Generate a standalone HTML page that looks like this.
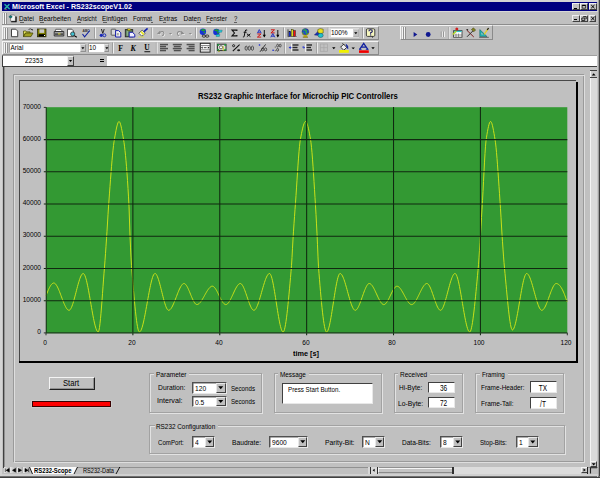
<!DOCTYPE html>
<html><head><meta charset="utf-8">
<style>
*{box-sizing:border-box}
html,body{margin:0;padding:0;width:600px;height:478px;overflow:hidden;background:#c0c0c0;font-family:"Liberation Sans",sans-serif;color:#000}
.a{position:absolute}
.t{position:absolute;white-space:nowrap;line-height:1;transform-origin:0 0}
svg{overflow:visible}
</style></head><body>
<div class="a" style="left:0px;top:0px;width:600px;height:478px;background:#d4d4d4;"></div>
<div class="a" style="left:2px;top:2px;width:596px;height:474px;background:#c0c0c0;"></div>
<div class="a" style="left:598px;top:0px;width:1px;height:478px;background:#a0a0a0;"></div>
<div class="a" style="left:599px;top:0px;width:1px;height:478px;background:#404040;"></div>
<div class="a" style="left:0px;top:476px;width:600px;height:1px;background:#707070;"></div>
<div class="a" style="left:0px;top:477px;width:600px;height:1px;background:#404040;"></div>
<div class="a" style="left:2px;top:2px;width:595.2px;height:8.8px;background:#000080;"></div>
<svg class="a" style="left:0;top:0" width="14" height="12"><path d="M4.6,4.2 L9.6,9 M9.4,4.2 L4.6,9" stroke="#30c0b0" stroke-width="1.3"/><path d="M4.8,4.4 L9.4,8.8" stroke="#108070" stroke-width="0.5"/><path d="M4.4,9.4 L7,9.4" stroke="#b07830" stroke-width="0.6"/></svg>
<div class="t" style="left:12.40px;top:4.43px;font-size:7.143px;transform:scaleX(0.9992);font-weight:bold;color:#fff">Microsoft Excel - RS232scopeV1.02</div>
<div class="a" style="left:572px;top:3px;width:7.6px;height:6.8px;background:#c0c0c0;border-top:1px solid #f0f0f0;border-left:1px solid #f0f0f0;border-right:1px solid #404040;border-bottom:1px solid #404040"></div>
<div class="a" style="left:574.2px;top:7.5px;width:3.3px;height:1px;background:#000;"></div>
<div class="a" style="left:580px;top:3px;width:7.6px;height:6.8px;background:#c0c0c0;border-top:1px solid #f0f0f0;border-left:1px solid #f0f0f0;border-right:1px solid #404040;border-bottom:1px solid #404040"></div>
<svg class="a" style="left:580px;top:3px" width="8" height="7"><path d="M2.2,2.2 H5.6 V5.2 H2.2Z" fill="none" stroke="#000" stroke-width="0.7"/><rect x="2.2" y="2" width="3.4" height="1" fill="#000"/></svg>
<div class="a" style="left:589px;top:3px;width:7.6px;height:6.8px;background:#c0c0c0;border-top:1px solid #f0f0f0;border-left:1px solid #f0f0f0;border-right:1px solid #404040;border-bottom:1px solid #404040"></div>
<svg class="a" style="left:589px;top:3px" width="8" height="7"><path d="M2.2,2 L5.5,5.2 M5.5,2 L2.2,5.2" stroke="#000" stroke-width="1"/></svg>
<div class="a" style="left:2px;top:11px;width:596px;height:1px;background:#d8d8d8;"></div>
<div class="a" style="left:2px;top:23.6px;width:596px;height:1px;background:#8c8c8c;"></div>
<div class="a" style="left:2px;top:24.6px;width:596px;height:0.8px;background:#e4e4e4;"></div>
<div class="a" style="left:3px;top:13px;width:1px;height:10.5px;background:#f4f4f4;"></div>
<div class="a" style="left:4px;top:13px;width:1px;height:10.5px;background:#909090;"></div>
<div class="a" style="left:5px;top:13px;width:1px;height:10.5px;background:#f4f4f4;"></div>
<div class="a" style="left:6px;top:13px;width:1px;height:10.5px;background:#909090;"></div>
<svg class="a" style="left:0;top:0" width="20" height="25"><path d="M10.6,15 H14.2 L15.4,16.2 V21.2 H10.6Z" fill="#f4f4f4" stroke="#404040" stroke-width="0.5"/><path d="M11.2,21.8 H16.1 V16.4" fill="none" stroke="#000" stroke-width="1.1"/><ellipse cx="10.6" cy="16.8" rx="1.5" ry="1.1" fill="#108080" stroke="#003030" stroke-width="0.4"/></svg>
<div class="t" style="left:19.00px;top:15.61px;font-size:6.505px;transform:scaleX(0.9825);color:#000">Datei</div>
<div class="t" style="left:39.00px;top:15.61px;font-size:6.505px;transform:scaleX(1.0164);color:#000">Bearbeiten</div>
<div class="t" style="left:77.00px;top:15.61px;font-size:6.505px;transform:scaleX(0.9176);color:#000">Ansicht</div>
<div class="t" style="left:102.00px;top:15.61px;font-size:6.505px;transform:scaleX(0.9899);color:#000">Einfügen</div>
<div class="t" style="left:133.00px;top:15.61px;font-size:6.505px;transform:scaleX(0.925);color:#000">Format</div>
<div class="t" style="left:159.00px;top:15.61px;font-size:6.505px;transform:scaleX(0.9859);color:#000">Extras</div>
<div class="t" style="left:183.50px;top:15.61px;font-size:6.505px;transform:scaleX(1.0);color:#000">Daten</div>
<div class="t" style="left:206.00px;top:15.61px;font-size:6.505px;transform:scaleX(0.9535);color:#000">Fenster</div>
<div class="t" style="left:233.50px;top:15.61px;font-size:6.505px;transform:scaleX(0.9231);color:#000">?</div>
<div class="a" style="left:20px;top:22.2px;width:3.8px;height:0.7px;background:#606060;"></div>
<div class="a" style="left:40px;top:22.2px;width:3.8px;height:0.7px;background:#606060;"></div>
<div class="a" style="left:77px;top:22.2px;width:4px;height:0.7px;background:#606060;"></div>
<div class="a" style="left:103px;top:22.2px;width:3.5px;height:0.7px;background:#606060;"></div>
<div class="a" style="left:150.5px;top:22.2px;width:2.2px;height:0.7px;background:#606060;"></div>
<div class="a" style="left:162.8px;top:22.2px;width:3px;height:0.7px;background:#606060;"></div>
<div class="a" style="left:197px;top:22.2px;width:3.2px;height:0.7px;background:#606060;"></div>
<div class="a" style="left:207px;top:22.2px;width:3.5px;height:0.7px;background:#606060;"></div>
<div class="a" style="left:234px;top:22.2px;width:3px;height:0.7px;background:#606060;"></div>
<div class="a" style="left:572px;top:15px;width:7.6px;height:6.6px;background:#c0c0c0;border-top:1px solid #f0f0f0;border-left:1px solid #f0f0f0;border-right:1px solid #404040;border-bottom:1px solid #404040"></div>
<div class="a" style="left:574.2px;top:19.2px;width:3.3px;height:1px;background:#000;"></div>
<div class="a" style="left:580px;top:15px;width:7.6px;height:6.6px;background:#c0c0c0;border-top:1px solid #f0f0f0;border-left:1px solid #f0f0f0;border-right:1px solid #404040;border-bottom:1px solid #404040"></div>
<svg class="a" style="left:580px;top:15px" width="8" height="6.8"><path d="M3.2,1.6 H6.2 V4 M1.8,3 H4.8 V5.4 H1.8Z" fill="none" stroke="#000" stroke-width="0.8"/></svg>
<div class="a" style="left:588.5px;top:15px;width:7.6px;height:6.6px;background:#c0c0c0;border-top:1px solid #f0f0f0;border-left:1px solid #f0f0f0;border-right:1px solid #404040;border-bottom:1px solid #404040"></div>
<svg class="a" style="left:588.5px;top:15px" width="8" height="6.8"><path d="M2.2,1.9 L5.5,5.1 M5.5,1.9 L2.2,5.1" stroke="#000" stroke-width="1"/></svg>
<div class="a" style="left:2px;top:25.5px;width:377px;height:14.5px;border-top:1px solid #f4f4f4;border-left:1px solid #f4f4f4;border-right:1px solid #8a8a8a;border-bottom:1px solid #8a8a8a"></div>
<div class="a" style="left:3.5px;top:27.5px;width:1px;height:11px;background:#f4f4f4;"></div>
<div class="a" style="left:4.5px;top:27.5px;width:1px;height:11px;background:#909090;"></div>
<div class="a" style="left:5.5px;top:27.5px;width:1px;height:11px;background:#f4f4f4;"></div>
<div class="a" style="left:6.5px;top:27.5px;width:1px;height:11px;background:#909090;"></div>
<div class="a" style="left:400px;top:25.2px;width:92.5px;height:15.3px;border-top:1px solid #f4f4f4;border-left:1px solid #f4f4f4;border-right:1px solid #8a8a8a;border-bottom:1px solid #8a8a8a"></div>
<div class="a" style="left:401.5px;top:27px;width:1px;height:11.5px;background:#f4f4f4;"></div>
<div class="a" style="left:402.5px;top:27px;width:1px;height:11.5px;background:#909090;"></div>
<div class="a" style="left:403.5px;top:27px;width:1px;height:11.5px;background:#f4f4f4;"></div>
<div class="a" style="left:404.5px;top:27px;width:1px;height:11.5px;background:#909090;"></div>
<div class="a" style="left:2px;top:40.5px;width:377px;height:14px;border-top:1px solid #f4f4f4;border-left:1px solid #f4f4f4;border-right:1px solid #8a8a8a;border-bottom:1px solid #8a8a8a"></div>
<div class="a" style="left:3.5px;top:42.5px;width:1px;height:10.5px;background:#f4f4f4;"></div>
<div class="a" style="left:4.5px;top:42.5px;width:1px;height:10.5px;background:#909090;"></div>
<div class="a" style="left:5.5px;top:42.5px;width:1px;height:10.5px;background:#f4f4f4;"></div>
<div class="a" style="left:6.5px;top:42.5px;width:1px;height:10.5px;background:#909090;"></div>
<svg class="a" style="left:0;top:0" width="600" height="60"><!-- standard toolbar -->
<!-- new -->
<path d="M11.5,29.2 H15.8 L17.7,31.1 V36.7 H11.5 Z" fill="#fff" stroke="#303030" stroke-width="0.9"/>
<!-- open -->
<path d="M23.5,31 H26 L26.8,31.8 H30 V33 H25.5 L23.5,36.6 Z" fill="#e8e860" stroke="#404000" stroke-width="0.7"/>
<path d="M23.5,36.6 L25.5,33 H33 L31,36.6 Z" fill="#a0a020" stroke="#404000" stroke-width="0.7"/>
<path d="M28.5,29.5 Q30.5,28 32.2,29.8" fill="none" stroke="#202020" stroke-width="0.7"/><path d="M31.3,29.2 L32.8,29.3 L32.4,30.7Z" fill="#000"/>
<!-- save -->
<rect x="37.6" y="29" width="8.4" height="7.8" fill="#808000" stroke="#202000" stroke-width="0.7"/>
<rect x="39.4" y="29.3" width="4.8" height="3.6" fill="#c8c8c8"/>
<rect x="38.6" y="34.2" width="6.4" height="2.4" fill="#000"/>
<rect x="44" y="35" width="1" height="1" fill="#fff"/>
<!-- print -->
<path d="M55.8,29.3 H61 L62.5,31.5 H55 Z" fill="#fff" stroke="#303030" stroke-width="0.7"/>
<path d="M54.2,31.5 H63.8 V36 H54.2 Z" fill="#a0a0a0" stroke="#202020" stroke-width="0.8"/>
<rect x="55" y="33.5" width="8" height="1.2" fill="#303030"/>
<rect x="58" y="33.4" width="2.5" height="1" fill="#e0e040"/>
<!-- preview -->
<path d="M67.5,29.2 H71.8 L73.4,30.8 V36.6 H67.5 Z" fill="#fff" stroke="#303030" stroke-width="0.8"/>
<circle cx="72.7" cy="34" r="2.1" fill="#40c0d0" stroke="#303030" stroke-width="0.8"/>
<path d="M74.2,35.6 L76.8,37.3" stroke="#000" stroke-width="1.1"/>
<!-- spell -->
<text x="82.5" y="32" font-size="3.3" font-family="Liberation Sans" font-weight="bold" fill="#303030">ABC</text>
<path d="M82.5,34 L84.6,36.8 L89.8,30.5" fill="none" stroke="#1020a0" stroke-width="1.1"/>
<!-- sep -->
<rect x="94.3" y="27.5" width="0.8" height="11" fill="#909090"/><rect x="95.1" y="27.5" width="0.8" height="11" fill="#fff"/>
<!-- cut -->
<path d="M101.4,29 L102.8,33.4 M104.2,29 L102.8,33.4" stroke="#181818" stroke-width="0.9"/>
<circle cx="101.3" cy="35.3" r="1.6" fill="#1828b8"/>
<circle cx="104.4" cy="35.3" r="1.45" fill="none" stroke="#1828b8" stroke-width="1"/>
<!-- copy -->
<rect x="111.2" y="29.2" width="4.6" height="6" rx="0.6" fill="#d8d8d8" stroke="#404040" stroke-width="0.8"/>
<path d="M115.6,30.6 H118.6 L120.8,32.8 V37 H115.6Z" fill="#f0f0f0" stroke="#1820b0" stroke-width="1"/>
<rect x="116.8" y="33" width="2" height="2.4" fill="#a8a8a8"/>
<!-- paste -->
<rect x="125.3" y="29.6" width="7.4" height="7.2" fill="#587858" stroke="#282828" stroke-width="0.9"/>
<rect x="126.6" y="30.8" width="1.6" height="5" fill="#88b088"/>
<rect x="127.6" y="28.9" width="3" height="1.5" fill="#e0d020" stroke="#404000" stroke-width="0.4"/>
<path d="M129.2,32.3 H132.4 L134.8,34.5 V37 H129.2Z" fill="#f0f0ff" stroke="#1820b0" stroke-width="1"/>
<!-- format painter -->
<path d="M138.8,33.2 L142.2,30.2 L145.2,33.4 L141.8,36.2Z" fill="#f4f4f4" stroke="#303030" stroke-width="0.7"/>
<path d="M141,31.6 L143.8,34.6" stroke="#e8e820" stroke-width="1.6"/>
<path d="M144,31.6 L147.6,28.4" stroke="#1020b0" stroke-width="1.6"/>
<rect x="138.4" y="36.6" width="5.6" height="0.8" fill="#e0e040"/>
<!-- sep -->
<rect x="151.5" y="27.5" width="0.8" height="11" fill="#909090"/><rect x="152.3" y="27.5" width="0.8" height="11" fill="#fff"/>
<!-- undo (disabled) -->
<g transform="translate(0.7,0.7)" fill="#f4f4f4" stroke="#f4f4f4">
<path d="M156.8,34 L160,30.8 L160.6,34.6Z" stroke="none"/>
<path d="M159.4,32.4 Q163.6,30.4 164,33.4 Q164,35.4 162,35.8" fill="none" stroke-width="1.1"/>
<path d="M168.9,33 H172.1 L170.5,34.7Z" stroke="none"/>
<path d="M184.6,34 L181.4,30.8 L180.8,34.6Z" stroke="none"/>
<path d="M182,32.4 Q177.8,30.4 177.4,33.4 Q177.4,35.4 179.4,35.8" fill="none" stroke-width="1.1"/>
<path d="M188.7,33 H191.9 L190.3,34.7Z" stroke="none"/>
</g>
<g fill="#8c8c8c" stroke="#8c8c8c">
<path d="M156.8,34 L160,30.8 L160.6,34.6Z" stroke="none"/>
<path d="M159.4,32.4 Q163.6,30.4 164,33.4 Q164,35.4 162,35.8" fill="none" stroke-width="1.1"/>
<path d="M168.9,33 H172.1 L170.5,34.7Z" stroke="none"/>
<path d="M184.6,34 L181.4,30.8 L180.8,34.6Z" stroke="none"/>
<path d="M182,32.4 Q177.8,30.4 177.4,33.4 Q177.4,35.4 179.4,35.8" fill="none" stroke-width="1.1"/>
<path d="M188.7,33 H191.9 L190.3,34.7Z" stroke="none"/>
</g>
<!-- sep -->
<rect x="195.3" y="27.5" width="0.8" height="11" fill="#909090"/><rect x="196.1" y="27.5" width="0.8" height="11" fill="#fff"/>
<!-- hyperlink -->
<circle cx="202.9" cy="31.7" r="3.2" fill="#1830d8"/>
<path d="M200.6,30.2 Q202.6,28 205.6,29.8 Q205.2,31.4 203.6,31.2 Q202.6,32.6 204.8,33.6 L205.8,32.4" fill="#20a030"/>
<ellipse cx="203.9" cy="36.1" rx="1.7" ry="1.15" fill="none" stroke="#202020" stroke-width="0.8"/>
<ellipse cx="207.2" cy="36.1" rx="1.7" ry="1.15" fill="none" stroke="#202020" stroke-width="0.8"/>
<!-- web -->
<circle cx="216.4" cy="31.9" r="3.2" fill="#1830d8"/>
<path d="M214.1,30.4 Q216.1,28.2 219.1,30 Q218.7,31.6 217.1,31.4 Q216.1,32.8 218.3,33.8 L219.3,32.6" fill="#20a030"/>
<path d="M218.6,30.2 H222.2 L221.6,32.2 H218.2Z" fill="#20d0e0" stroke="#106070" stroke-width="0.4"/>
<path d="M216.4,34.4 H219.8 L219.4,36.4 H216Z" fill="#20d0e0" stroke="#106070" stroke-width="0.4"/>
<!-- sep -->
<rect x="225" y="27.5" width="0.8" height="11" fill="#909090"/><rect x="225.8" y="27.5" width="0.8" height="11" fill="#fff"/>
<!-- sigma -->
<path d="M236.9,31 V30.1 H232 L234.5,33 L232,35.9 H236.9 V35" fill="none" stroke="#101010" stroke-width="1.1"/>
<!-- fx -->
<path d="M247.2,30.2 Q245.6,29.2 245.2,31 L244.2,36.2 Q243.8,37.4 242.9,37" fill="none" stroke="#101010" stroke-width="1"/>
<path d="M243.6,32.3 H246.6" stroke="#101010" stroke-width="0.9"/>
<path d="M246.9,33.8 L250.4,36.6 M250.4,33.8 L246.9,36.6" stroke="#101010" stroke-width="1"/>
<!-- sort asc -->
<path d="M257.3,33.3 L259.3,29.6 L261.3,33.3 M258,32.2 H260.6" fill="none" stroke="#2030c0" stroke-width="0.95"/>
<path d="M257.4,34 H261 L257.4,37.1 H261.2" fill="none" stroke="#d01010" stroke-width="0.95"/>
<path d="M264.3,30 V36.4" stroke="#000" stroke-width="0.9"/><path d="M262.7,34.8 H265.9 L264.3,37.4Z" fill="#000"/>
<!-- sort desc -->
<path d="M270.9,29.8 H274.5 L270.9,32.9 H274.7" fill="none" stroke="#d01010" stroke-width="0.95"/>
<path d="M270.8,37.3 L272.8,33.6 L274.8,37.3 M271.5,36.2 H274.1" fill="none" stroke="#2030c0" stroke-width="0.95"/>
<path d="M277.8,30 V36.4" stroke="#000" stroke-width="0.9"/><path d="M276.2,34.8 H279.4 L277.8,37.4Z" fill="#000"/>
<!-- sep -->
<rect x="283.3" y="27.5" width="0.8" height="11" fill="#909090"/><rect x="284.1" y="27.5" width="0.8" height="11" fill="#fff"/>
<!-- chart wizard -->
<path d="M288,29.3 V36.8 H296.8" fill="none" stroke="#303030" stroke-width="0.8"/>
<rect x="288.9" y="31.4" width="1.9" height="5" fill="#1830d0" stroke="#101010" stroke-width="0.4"/>
<rect x="291.2" y="29.3" width="1.9" height="7.1" fill="#f0f020" stroke="#101010" stroke-width="0.4"/>
<rect x="293.6" y="30.5" width="1.9" height="5.9" fill="#f01010" stroke="#101010" stroke-width="0.4"/>
<path d="M288.4,37.4 H296.8" stroke="#fff" stroke-width="0.6"/>
<!-- map -->
<circle cx="305.4" cy="31.9" r="3.4" fill="#2048c8" stroke="#203040" stroke-width="0.4"/>
<path d="M303.2,30 Q305.3,29.6 306.4,31 Q305.2,32.6 307.6,33.8 M302.6,32.4 L303.6,33" fill="none" stroke="#30b040" stroke-width="1.3"/>
<path d="M301.8,33.2 Q305.4,37.6 309,33.2" fill="none" stroke="#c0b000" stroke-width="0.9"/>
<rect x="303.8" y="35.6" width="3.2" height="1.2" fill="#d0c000"/>
<rect x="302.8" y="36.6" width="5.2" height="1" fill="#807000"/>
<!-- drawing -->
<path d="M314.4,35 L318.8,30.6 L319.6,35.4Z" fill="#1830c0" stroke="#101040" stroke-width="0.4"/>
<path d="M317.8,29.6 L320.2,28.6 L323.2,29.2 V33 L320.2,33.6 L317.8,32.6Z" fill="#e8e020" stroke="#404000" stroke-width="0.5"/>
<ellipse cx="320.6" cy="35.4" rx="2.6" ry="2.1" fill="#20c0c8" stroke="#105060" stroke-width="0.5"/>
<!-- sep -->
<rect x="327.8" y="27.5" width="0.8" height="11" fill="#909090"/><rect x="328.6" y="27.5" width="0.8" height="11" fill="#fff"/>
<!-- sep -->
<rect x="362.3" y="27.5" width="0.8" height="11" fill="#909090"/><rect x="363.1" y="27.5" width="0.8" height="11" fill="#fff"/>
<!-- help -->
<rect x="366.4" y="28.8" width="8.4" height="7.6" rx="1.2" fill="#f8f8c0" stroke="#303030" stroke-width="0.9"/>
<path d="M368.9,31.2 Q368.9,29.8 370.6,29.8 Q372.3,29.8 372.3,31.2 Q372.3,32.2 370.6,32.8 V33.8" fill="none" stroke="#101060" stroke-width="1.1"/>
<rect x="370.1" y="34.4" width="1.1" height="1.1" fill="#101060"/>
<path d="M371.6,36.4 L372.6,38 L373.4,36.4Z" fill="#303030"/>

<!-- VB toolbar -->
<path d="M413.6,32 L417.3,34.5 L413.6,37Z" fill="#101890"/>
<circle cx="428.2" cy="34.5" r="2.4" fill="#101890"/>
<rect x="440.8" y="31.5" width="1" height="5.5" fill="#8a8a8a"/><rect x="443.2" y="31.5" width="1" height="5.5" fill="#8a8a8a"/>
<rect x="441.8" y="31.5" width="0.8" height="5.5" fill="#fff"/><rect x="444.2" y="31.5" width="0.8" height="5.5" fill="#fff"/>
<rect x="448.6" y="27" width="0.8" height="12" fill="#909090"/><rect x="449.4" y="27" width="0.8" height="12" fill="#fff"/>
<rect x="453.6" y="30.6" width="8.4" height="6.6" fill="#fff" stroke="#303030" stroke-width="0.8"/>
<rect x="454" y="30.8" width="7.6" height="1.3" fill="#30c8d0"/>
<path d="M456,33.5 V37 M458.6,33.5 V37 M454,35 H462" stroke="#505050" stroke-width="0.6"/>
<circle cx="456.8" cy="28.9" r="1.5" fill="#d02020"/>
<path d="M452.8,34.6 L456.4,31" stroke="#b0d020" stroke-width="1.4"/>
<path d="M466.8,30.2 L473.8,37" stroke="#802020" stroke-width="1"/>
<path d="M466.2,29.6 Q467.6,28.4 468.4,30 Q467.2,31.2 466.2,29.6Z" fill="#202020"/>
<path d="M467,36.8 L473.4,30.4" stroke="#303030" stroke-width="1"/>
<path d="M471.4,29.6 L473.4,27.8 L475.6,30 L473.8,31.8Z" fill="#808020" stroke="#404010" stroke-width="0.5"/>
<path d="M479.8,36.6 V29.6 L487,36.6Z" fill="#20b0b0" stroke="#106868" stroke-width="0.6"/>
<path d="M481.4,34.6 V32.6 L483.4,34.6Z" fill="#c0c0c0"/>
<path d="M484.2,34.4 L488.2,28.6" stroke="#e0d020" stroke-width="1.3"/>
<path d="M487.2,30 L488.6,28" stroke="#202020" stroke-width="1.3"/>
<rect x="479.2" y="36.8" width="9.6" height="1" fill="#606060"/>

<!-- format toolbar -->
<rect x="112.3" y="42.5" width="0.8" height="11" fill="#909090"/><rect x="113.1" y="42.5" width="0.8" height="11" fill="#fff"/>
<text x="118.2" y="50.6" font-size="7.8" font-family="Liberation Serif" font-weight="bold" fill="#000">F</text>
<text x="130.6" y="50.6" font-size="7.8" font-family="Liberation Serif" font-weight="bold" font-style="italic" fill="#000">K</text>
<text x="144.2" y="50.4" font-size="7.4" font-family="Liberation Serif" font-weight="bold" fill="#000">U</text>
<rect x="144.4" y="51.3" width="5.8" height="0.9" fill="#000"/>
<rect x="155.9" y="42.5" width="0.8" height="11" fill="#909090"/><rect x="156.7" y="42.5" width="0.8" height="11" fill="#fff"/>
<g fill="#505050">
<rect x="160" y="43.8" width="8" height="1.5"/><rect x="160" y="45.8" width="6" height="1.5"/><rect x="160" y="47.8" width="8" height="1.5"/><rect x="160" y="49.8" width="6" height="1.5"/>
<rect x="172.8" y="43.8" width="9" height="1.5"/><rect x="173.8" y="45.8" width="7" height="1.5"/><rect x="172.8" y="47.8" width="9" height="1.5"/><rect x="173.8" y="49.8" width="7" height="1.5"/>
<rect x="186.6" y="43.8" width="8" height="1.5"/><rect x="188.6" y="45.8" width="6" height="1.5"/><rect x="186.6" y="47.8" width="8" height="1.5"/><rect x="188.6" y="49.8" width="6" height="1.5"/>
</g>
<rect x="200.3" y="43.3" width="9.8" height="8.8" fill="#fff" stroke="#202020" stroke-width="1"/>
<path d="M200.3,45.6 H210.1 M200.3,49.8 H210.1" stroke="#606060" stroke-width="0.8"/>
<path d="M201,47.7 L202.6,46.6 V48.8Z M209.4,47.7 L207.8,46.6 V48.8Z" fill="#000"/>
<path d="M203.8,47.7 H206.6" stroke="#404040" stroke-width="1"/>
<rect x="214.5" y="42.5" width="0.8" height="11" fill="#909090"/><rect x="215.3" y="42.5" width="0.8" height="11" fill="#fff"/>
<!-- currency -->
<rect x="217.4" y="44.2" width="8.6" height="6.4" fill="#e0e0d8" stroke="#202020" stroke-width="0.9"/>
<circle cx="218.2" cy="45" r="1" fill="#20a040"/><circle cx="225.2" cy="45" r="1" fill="#20a040"/>
<circle cx="218.2" cy="49.8" r="1" fill="#20a040"/><circle cx="225.2" cy="49.8" r="1" fill="#20a040"/>
<circle cx="221" cy="47.3" r="1.6" fill="#fff" stroke="#303030" stroke-width="0.7"/>
<path d="M223.2,46.2 V50.8" stroke="#c0c020" stroke-width="1"/>
<circle cx="219" cy="51.3" r="0.8" fill="#a0a020"/>
<!-- percent -->
<path d="M239.6,44.6 L232.8,51.2" stroke="#101010" stroke-width="1.05"/>
<circle cx="233.6" cy="45.7" r="1.05" fill="none" stroke="#101010" stroke-width="0.9"/>
<ellipse cx="238.6" cy="50.2" rx="1.5" ry="1" fill="#202020"/>
<!-- 000 -->
<g fill="none" stroke="#484848" stroke-width="0.95">
<ellipse cx="246.2" cy="48.2" rx="1.15" ry="2.1"/><ellipse cx="249.3" cy="48.2" rx="1.15" ry="2.1"/><ellipse cx="252.4" cy="48.2" rx="1.15" ry="2.1"/>
</g>
<!-- inc decimal -->
<rect x="258.8" y="44.3" width="1.4" height="1.4" fill="#2030d0"/>
<path d="M260,51.8 L265.6,44.4" stroke="#202020" stroke-width="0.9"/>
<ellipse cx="262.6" cy="49.4" rx="1.1" ry="1.5" fill="none" stroke="#303030" stroke-width="0.8"/>
<ellipse cx="265.6" cy="49.4" rx="1.1" ry="1.5" fill="none" stroke="#303030" stroke-width="0.8"/>
<!-- dec decimal -->
<rect x="272.4" y="49.6" width="1.4" height="1.4" fill="#2030d0"/>
<rect x="274.8" y="46.6" width="0.9" height="0.9" fill="#303030"/><rect x="274.8" y="50.3" width="0.9" height="0.9" fill="#303030"/>
<ellipse cx="277.6" cy="45.6" rx="0.95" ry="1.4" fill="none" stroke="#303030" stroke-width="0.75"/>
<ellipse cx="280.2" cy="45.6" rx="0.95" ry="1.4" fill="none" stroke="#303030" stroke-width="0.75"/>
<ellipse cx="277.6" cy="49.8" rx="0.95" ry="1.4" fill="none" stroke="#303030" stroke-width="0.75"/>
<rect x="284.1" y="42.5" width="0.8" height="11" fill="#909090"/><rect x="284.9" y="42.5" width="0.8" height="11" fill="#fff"/>
<!-- outdent -->
<rect x="291" y="43.6" width="1.2" height="8.2" fill="#f0f0f0"/>
<g fill="#282828"><rect x="292.5" y="44.3" width="6" height="1.4"/><rect x="292.5" y="46.8" width="5" height="1.4"/><rect x="292.5" y="49.3" width="6" height="1.4"/></g>
<path d="M288.6,47.6 L290.6,46.3 V48.9Z" fill="#2030d0"/>
<rect x="290.2" y="47.1" width="1.2" height="1" fill="#2030d0"/>
<!-- indent -->
<rect x="305" y="43.6" width="1.2" height="8.2" fill="#f0f0f0"/>
<g fill="#282828"><rect x="306.5" y="44.3" width="5.5" height="1.4"/><rect x="306.5" y="46.8" width="4.5" height="1.4"/><rect x="306.5" y="49.3" width="5.5" height="1.4"/></g>
<path d="M302.4,47.1 H304" stroke="#2030d0" stroke-width="1"/><path d="M303.6,46.2 L305,47.6 L303.6,49Z" fill="#2030d0"/>
<rect x="316.1" y="42.5" width="0.8" height="11" fill="#909090"/><rect x="316.9" y="42.5" width="0.8" height="11" fill="#fff"/>
<!-- borders -->
<rect x="320.3" y="44" width="7.3" height="7.3" fill="none" stroke="#a8a8a8" stroke-width="0.8"/>
<path d="M323.95,44 V51.3 M320.3,47.65 H327.6" stroke="#a8a8a8" stroke-width="0.8"/>
<path d="M332.1,47.3 H335.5 L333.8,49.2Z" fill="#000"/>
<!-- fill color -->
<path d="M340.6,47.2 L343.6,44.2 L346.8,47.4 L343.8,50.2Z" fill="#f0f0f0" stroke="#202020" stroke-width="0.9"/>
<path d="M342.4,43.2 L344.2,45" stroke="#202020" stroke-width="0.8"/>
<path d="M345.8,44.2 Q348.6,45.6 347.8,48.6 L346.8,47.4" fill="#1020a0" stroke="#1020a0" stroke-width="0.8"/>
<rect x="339" y="50" width="9.8" height="2.8" fill="#f0f000"/>
<path d="M351.5,47.4 H354.9 L353.2,49.3Z" fill="#000"/>
<!-- font color -->
<path d="M359.6,49.4 L363.7,43.4 L367.8,49.4 M361.4,47.2 H366" fill="none" stroke="#1020a0" stroke-width="1.3"/>
<path d="M359,49.4 H361.6 M365.8,49.4 H368.6" stroke="#1020a0" stroke-width="0.8"/>
<rect x="359" y="50.3" width="9.8" height="2.6" fill="#f00000"/>
<path d="M371.3,47.3 H374.7 L373,49.2Z" fill="#000"/>
</svg>
<div class="a" style="left:8.5px;top:43px;width:77.5px;height:9.5px;background:#fff;border:1px solid #c8c8c8;border-top-color:#a0a0a0;border-left-color:#a0a0a0"></div>
<div class="a" style="left:80px;top:43.5px;width:5.8px;height:8.5px;background:#c0c0c0;border-top:1px solid #e0e0e0;border-left:1px solid #e0e0e0;border-right:1px solid #909090;border-bottom:1px solid #909090"></div>
<svg class="a" style="left:80px;top:43.5px" width="5.8" height="8.5"><path d="M1.4,3.35 L4.4,3.35 L2.9,5.15Z" fill="#000"/></svg>
<div class="t" style="left:10.50px;top:44.74px;font-size:6.429px;transform:scaleX(1.0);color:#000">Arial</div>
<div class="a" style="left:87.5px;top:43px;width:22px;height:9.5px;background:#fff;border:1px solid #c8c8c8;border-top-color:#a0a0a0;border-left-color:#a0a0a0"></div>
<div class="a" style="left:103.5px;top:43.5px;width:5.8px;height:8.5px;background:#c0c0c0;border-top:1px solid #e0e0e0;border-left:1px solid #e0e0e0;border-right:1px solid #909090;border-bottom:1px solid #909090"></div>
<svg class="a" style="left:103.5px;top:43.5px" width="5.8" height="8.5"><path d="M1.4,3.35 L4.4,3.35 L2.9,5.15Z" fill="#000"/></svg>
<div class="t" style="left:89.00px;top:44.74px;font-size:6.429px;transform:scaleX(1.0);color:#000">10</div>
<div class="a" style="left:330.2px;top:28.2px;width:28.6px;height:9.4px;background:#fff;border:0.5px solid #d8d8d8"></div>
<div class="a" style="left:353.2px;top:28.6px;width:5.6px;height:8.6px;background:#c0c0c0;border-top:1px solid #d0d0d0;border-left:1px solid #d0d0d0;border-right:1px solid #b0b0b0;border-bottom:1px solid #b0b0b0"></div>
<svg class="a" style="left:353.2px;top:28.6px" width="5.6" height="8.6"><path d="M1.1999999999999997,3.34 L4.4,3.34 L2.8,5.26Z" fill="#000"/></svg>
<div class="t" style="left:331.00px;top:30.19px;font-size:6.939px;transform:scaleX(0.9412);color:#000">100%</div>
<div class="a" style="left:2px;top:55px;width:72px;height:11px;background:#fff;border-left:1px solid #404040;border-top:1px solid #a0a0a0"></div>
<div class="a" style="left:66.5px;top:56px;width:7px;height:10px;background:#c0c0c0;border-top:1px solid #f0f0f0;border-left:1px solid #f0f0f0;border-right:1px solid #404040;border-bottom:1px solid #404040"></div>
<svg class="a" style="left:66.5px;top:56px" width="7" height="10"><path d="M1.9,4.04 L5.1,4.04 L3.5,5.96Z" fill="#000"/></svg>
<div class="t" style="left:25.00px;top:58.43px;font-size:7.143px;transform:scaleX(0.8861);color:#000">Z2353</div>
<div class="a" style="left:100px;top:59.3px;width:4.2px;height:1.1px;background:#000;"></div>
<div class="a" style="left:100px;top:61.4px;width:4.2px;height:1.1px;background:#000;"></div>
<div class="a" style="left:106.5px;top:55px;width:490.5px;height:11px;background:#fff;"></div>
<div class="a" style="left:106.5px;top:55px;width:490.5px;height:0.8px;background:#a0a0a0;"></div>
<div class="a" style="left:597px;top:55px;width:1px;height:11px;background:#c8c8c8;"></div>
<div class="a" style="left:2px;top:66px;width:596px;height:1px;background:#404040;"></div>
<div class="a" style="left:2.5px;top:66px;width:1px;height:402px;background:#404040;"></div>
<div class="a" style="left:3.5px;top:67px;width:1px;height:400px;background:#909090;"></div>
<div class="a" style="left:13px;top:74px;width:571px;height:388px;border:1px solid #9a9a9a"></div>
<div class="a" style="left:14px;top:75px;width:571px;height:388px;border:1px solid #dedede"></div>
<div class="a" style="left:19.3px;top:82px;width:558.7px;height:281px;background:#000;"></div>
<div class="a" style="left:19.3px;top:80.3px;width:557px;height:281px;background:#c0c0c0;border:1px solid #484848;border-right:none;border-bottom:none"></div>
<svg class="a" style="left:0;top:0" width="600" height="478"><rect x="46" y="107.2" width="521.3" height="225.9" fill="#339933"/><path d="M46.0,296.0 L46.5,294.6 L47.0,293.3 L47.5,292.0 L48.0,290.7 L48.5,289.6 L49.0,288.5 L49.5,287.5 L50.0,286.6 L50.5,285.7 L51.0,285.0 L51.5,284.4 L52.0,283.8 L52.5,283.5 L53.0,283.2 L53.5,283.0 L54.0,283.0 L54.5,283.2 L55.0,283.5 L55.5,283.9 L56.0,284.6 L56.5,285.3 L57.0,286.1 L57.5,287.1 L58.0,288.1 L58.5,289.2 L59.0,290.4 L59.5,291.6 L60.0,292.9 L60.5,294.2 L61.0,295.6 L61.5,296.9 L62.0,298.3 L62.5,299.6 L63.0,300.9 L63.5,302.2 L64.0,303.4 L64.5,304.5 L65.0,305.6 L65.5,306.6 L66.0,307.5 L66.5,308.3 L67.0,309.0 L67.5,309.6 L68.0,310.0 L68.5,310.2 L69.0,310.3 L69.5,310.2 L70.0,309.8 L70.5,309.2 L71.0,308.3 L71.5,307.3 L72.0,306.1 L72.5,304.7 L73.0,303.2 L73.5,301.6 L74.0,299.8 L74.5,298.0 L75.0,296.1 L75.5,294.2 L76.0,292.3 L76.5,290.3 L77.0,288.4 L77.5,286.5 L78.0,284.7 L78.5,282.9 L79.0,281.3 L79.5,279.7 L80.0,278.3 L80.5,277.0 L81.0,275.9 L81.5,275.0 L82.0,274.2 L82.5,273.8 L83.0,273.5 L83.5,273.6 L84.0,274.0 L84.5,274.7 L85.0,275.8 L85.5,277.2 L86.0,278.9 L86.5,280.7 L87.0,282.9 L87.5,285.2 L88.0,287.6 L88.5,290.2 L89.0,293.0 L89.5,295.8 L90.0,298.7 L90.5,301.6 L91.0,304.5 L91.5,307.4 L92.0,310.3 L92.5,313.1 L93.0,315.8 L93.5,318.4 L94.0,320.8 L94.5,323.1 L95.0,325.1 L95.5,327.0 L96.0,328.6 L96.5,329.9 L97.0,330.9 L97.5,331.6 L98.0,332.0 L98.5,331.7 L99.0,330.2 L99.5,327.4 L100.0,323.5 L100.5,318.7 L101.0,313.2 L101.5,307.0 L102.0,300.5 L102.5,293.6 L103.0,286.7 L103.5,279.9 L104.0,273.2 L104.5,267.0 L105.0,260.5 L105.5,253.5 L106.0,246.2 L106.5,238.8 L107.0,231.2 L107.5,223.0 L108.0,214.7 L108.5,206.9 L109.0,200.0 L109.5,193.1 L110.0,186.3 L110.5,179.5 L111.0,173.0 L111.5,166.7 L112.0,160.7 L112.5,155.1 L113.0,150.1 L113.5,145.6 L114.0,141.8 L114.5,138.7 L115.0,135.9 L115.5,133.1 L116.0,130.5 L116.5,128.0 L117.0,125.9 L117.5,124.1 L118.0,122.7 L118.5,121.8 L119.0,121.5 L119.5,121.8 L120.0,122.7 L120.5,124.2 L121.0,126.0 L121.5,128.3 L122.0,130.8 L122.5,133.5 L123.0,136.4 L123.5,139.3 L124.0,142.5 L124.5,146.2 L125.0,150.5 L125.5,155.3 L126.0,160.7 L126.5,166.7 L127.0,173.3 L127.5,180.6 L128.0,188.4 L128.5,196.9 L129.0,206.2 L129.5,221.0 L130.0,235.8 L130.5,247.1 L131.0,257.1 L131.5,265.5 L132.0,272.0 L132.5,278.2 L133.0,284.4 L133.5,290.4 L134.0,296.1 L134.5,301.7 L135.0,306.9 L135.5,311.8 L136.0,316.2 L136.5,320.3 L137.0,323.8 L137.5,326.7 L138.0,329.1 L138.5,330.8 L139.0,331.7 L139.5,332.0 L140.0,331.7 L140.5,331.2 L141.0,330.3 L141.5,329.1 L142.0,327.7 L142.5,326.0 L143.0,324.1 L143.5,322.0 L144.0,319.7 L144.5,317.3 L145.0,314.8 L145.5,312.2 L146.0,309.4 L146.5,306.7 L147.0,303.9 L147.5,301.1 L148.0,298.3 L148.5,295.5 L149.0,292.8 L149.5,290.2 L150.0,287.7 L150.5,285.3 L151.0,283.1 L151.5,281.0 L152.0,279.2 L152.5,277.5 L153.0,276.1 L153.5,275.0 L154.0,274.2 L154.5,273.7 L155.0,273.5 L155.5,273.6 L156.0,274.1 L156.5,274.7 L157.0,275.7 L157.5,276.8 L158.0,278.1 L158.5,279.6 L159.0,281.2 L159.5,282.9 L160.0,284.8 L160.5,286.7 L161.0,288.7 L161.5,290.7 L162.0,292.7 L162.5,294.7 L163.0,296.7 L163.5,298.7 L164.0,300.5 L164.5,302.3 L165.0,303.9 L165.5,305.4 L166.0,306.8 L166.5,307.9 L167.0,308.9 L167.5,309.6 L168.0,310.1 L168.5,310.3 L169.0,310.2 L169.5,310.0 L170.0,309.7 L170.5,309.2 L171.0,308.6 L171.5,307.8 L172.0,307.0 L172.5,306.0 L173.0,305.0 L173.5,303.9 L174.0,302.7 L174.5,301.5 L175.0,300.3 L175.5,299.0 L176.0,297.7 L176.5,296.4 L177.0,295.1 L177.5,293.8 L178.0,292.5 L178.5,291.3 L179.0,290.1 L179.5,289.0 L180.0,288.0 L180.5,287.0 L181.0,286.2 L181.5,285.4 L182.0,284.7 L182.5,284.2 L183.0,283.8 L183.5,283.6 L184.0,283.5 L184.5,283.6 L185.0,283.9 L185.5,284.3 L186.0,284.9 L186.5,285.6 L187.0,286.4 L187.5,287.3 L188.0,288.3 L188.5,289.4 L189.0,290.6 L189.5,291.7 L190.0,292.9 L190.5,294.2 L191.0,295.4 L191.5,296.6 L192.0,297.8 L192.5,298.9 L193.0,300.0 L193.5,301.0 L194.0,301.9 L194.5,302.7 L195.0,303.4 L195.5,303.9 L196.0,304.3 L196.5,304.5 L197.0,304.6 L197.5,304.5 L198.0,304.3 L198.5,304.0 L199.0,303.7 L199.5,303.2 L200.0,302.7 L200.5,302.1 L201.0,301.4 L201.5,300.7 L202.0,299.9 L202.5,299.1 L203.0,298.2 L203.5,297.4 L204.0,296.5 L204.5,295.6 L205.0,294.7 L205.5,293.8 L206.0,292.9 L206.5,292.1 L207.0,291.2 L207.5,290.4 L208.0,289.7 L208.5,289.0 L209.0,288.4 L209.5,287.8 L210.0,287.3 L210.5,286.9 L211.0,286.6 L211.5,286.3 L212.0,286.2 L212.5,286.2 L213.0,286.3 L213.5,286.6 L214.0,287.0 L214.5,287.5 L215.0,288.1 L215.5,288.8 L216.0,289.6 L216.5,290.4 L217.0,291.3 L217.5,292.3 L218.0,293.3 L218.5,294.3 L219.0,295.3 L219.5,296.3 L220.0,297.3 L220.5,298.3 L221.0,299.3 L221.5,300.2 L222.0,301.0 L222.5,301.8 L223.0,302.6 L223.5,303.2 L224.0,303.7 L224.5,304.1 L225.0,304.4 L225.5,304.6 L226.0,304.6 L226.5,304.5 L227.0,304.2 L227.5,303.8 L228.0,303.3 L228.5,302.7 L229.0,302.0 L229.5,301.2 L230.0,300.3 L230.5,299.4 L231.0,298.4 L231.5,297.4 L232.0,296.3 L232.5,295.2 L233.0,294.2 L233.5,293.1 L234.0,292.0 L234.5,290.9 L235.0,289.9 L235.5,288.9 L236.0,288.0 L236.5,287.1 L237.0,286.3 L237.5,285.6 L238.0,284.9 L238.5,284.4 L239.0,284.0 L239.5,283.7 L240.0,283.5 L240.5,283.5 L241.0,283.7 L241.5,284.1 L242.0,284.7 L242.5,285.4 L243.0,286.2 L243.5,287.3 L244.0,288.4 L244.5,289.6 L245.0,290.9 L245.5,292.3 L246.0,293.7 L246.5,295.1 L247.0,296.6 L247.5,298.1 L248.0,299.5 L248.5,301.0 L249.0,302.4 L249.5,303.7 L250.0,305.0 L250.5,306.1 L251.0,307.2 L251.5,308.1 L252.0,308.9 L252.5,309.5 L253.0,310.0 L253.5,310.2 L254.0,310.3 L254.5,310.1 L255.0,309.8 L255.5,309.2 L256.0,308.5 L256.5,307.6 L257.0,306.5 L257.5,305.3 L258.0,304.0 L258.5,302.6 L259.0,301.1 L259.5,299.5 L260.0,297.8 L260.5,296.1 L261.0,294.4 L261.5,292.6 L262.0,290.8 L262.5,289.1 L263.0,287.3 L263.5,285.6 L264.0,284.0 L264.5,282.4 L265.0,280.9 L265.5,279.5 L266.0,278.2 L266.5,277.1 L267.0,276.0 L267.5,275.2 L268.0,274.5 L268.5,273.9 L269.0,273.6 L269.5,273.5 L270.0,273.7 L270.5,274.4 L271.0,275.5 L271.5,276.9 L272.0,278.7 L272.5,280.8 L273.0,283.1 L273.5,285.7 L274.0,288.5 L274.5,291.4 L275.0,294.5 L275.5,297.6 L276.0,300.8 L276.5,304.0 L277.0,307.3 L277.5,310.4 L278.0,313.5 L278.5,316.4 L279.0,319.3 L279.5,321.9 L280.0,324.3 L280.5,326.4 L281.0,328.2 L281.5,329.8 L282.0,330.9 L282.5,331.7 L283.0,332.0 L283.5,331.8 L284.0,330.9 L284.5,329.4 L285.0,327.2 L285.5,324.6 L286.0,321.4 L286.5,317.8 L287.0,313.7 L287.5,309.3 L288.0,304.5 L288.5,299.5 L289.0,294.2 L289.5,288.8 L290.0,283.2 L290.5,277.5 L291.0,271.7 L291.5,265.6 L292.0,257.6 L292.5,248.2 L293.0,239.1 L293.5,231.2 L294.0,223.7 L294.5,216.6 L295.0,209.6 L295.5,202.7 L296.0,195.5 L296.5,187.9 L297.0,180.2 L297.5,172.5 L298.0,165.1 L298.5,158.1 L299.0,151.8 L299.5,146.3 L300.0,141.9 L300.5,138.8 L301.0,136.1 L301.5,133.5 L302.0,131.1 L302.5,128.9 L303.0,126.9 L303.5,125.1 L304.0,123.7 L304.5,122.6 L305.0,121.8 L305.5,121.5 L306.0,121.7 L306.5,122.3 L307.0,123.4 L307.5,124.9 L308.0,126.7 L308.5,128.8 L309.0,131.2 L309.5,133.8 L310.0,136.5 L310.5,139.3 L311.0,142.8 L311.5,147.3 L312.0,152.8 L312.5,159.2 L313.0,166.2 L313.5,173.7 L314.0,181.5 L314.5,189.6 L315.0,197.7 L315.5,205.7 L316.0,214.4 L316.5,223.9 L317.0,233.8 L317.5,244.8 L318.0,256.9 L318.5,266.8 L319.0,273.4 L319.5,279.7 L320.0,285.8 L320.5,291.7 L321.0,297.3 L321.5,302.6 L322.0,307.6 L322.5,312.2 L323.0,316.5 L323.5,320.3 L324.0,323.6 L324.5,326.4 L325.0,328.7 L325.5,330.4 L326.0,331.5 L326.5,332.0 L327.0,331.8 L327.5,331.3 L328.0,330.2 L328.5,328.8 L329.0,327.1 L329.5,325.1 L330.0,322.7 L330.5,320.2 L331.0,317.4 L331.5,314.5 L332.0,311.4 L332.5,308.2 L333.0,305.0 L333.5,301.8 L334.0,298.5 L334.5,295.3 L335.0,292.2 L335.5,289.2 L336.0,286.4 L336.5,283.8 L337.0,281.3 L337.5,279.2 L338.0,277.3 L338.5,275.8 L339.0,274.6 L339.5,273.8 L340.0,273.5 L340.5,273.6 L341.0,273.9 L341.5,274.4 L342.0,275.1 L342.5,276.0 L343.0,277.1 L343.5,278.3 L344.0,279.6 L344.5,281.1 L345.0,282.6 L345.5,284.3 L346.0,286.0 L346.5,287.7 L347.0,289.5 L347.5,291.4 L348.0,293.2 L348.5,295.0 L349.0,296.8 L349.5,298.5 L350.0,300.2 L350.5,301.8 L351.0,303.3 L351.5,304.8 L352.0,306.0 L352.5,307.2 L353.0,308.2 L353.5,309.0 L354.0,309.6 L354.5,310.1 L355.0,310.3 L355.5,310.3 L356.0,310.1 L356.5,309.7 L357.0,309.1 L357.5,308.4 L358.0,307.5 L358.5,306.6 L359.0,305.5 L359.5,304.3 L360.0,303.1 L360.5,301.8 L361.0,300.4 L361.5,299.0 L362.0,297.6 L362.5,296.2 L363.0,294.8 L363.5,293.4 L364.0,292.0 L364.5,290.7 L365.0,289.5 L365.5,288.3 L366.0,287.2 L366.5,286.3 L367.0,285.4 L367.5,284.7 L368.0,284.1 L368.5,283.7 L369.0,283.5 L369.5,283.5 L370.0,283.6 L370.5,283.9 L371.0,284.3 L371.5,284.8 L372.0,285.4 L372.5,286.1 L373.0,286.9 L373.5,287.8 L374.0,288.7 L374.5,289.7 L375.0,290.7 L375.5,291.8 L376.0,292.9 L376.5,293.9 L377.0,295.0 L377.5,296.1 L378.0,297.2 L378.5,298.2 L379.0,299.2 L379.5,300.1 L380.0,301.0 L380.5,301.8 L381.0,302.5 L381.5,303.2 L382.0,303.7 L382.5,304.1 L383.0,304.4 L383.5,304.6 L384.0,304.6 L384.5,304.5 L385.0,304.2 L385.5,303.8 L386.0,303.2 L386.5,302.6 L387.0,301.9 L387.5,301.1 L388.0,300.2 L388.5,299.3 L389.0,298.3 L389.5,297.3 L390.0,296.2 L390.5,295.2 L391.0,294.1 L391.5,293.1 L392.0,292.1 L392.5,291.2 L393.0,290.2 L393.5,289.4 L394.0,288.6 L394.5,287.9 L395.0,287.3 L395.5,286.9 L396.0,286.5 L396.5,286.3 L397.0,286.2 L397.5,286.3 L398.0,286.4 L398.5,286.7 L399.0,287.1 L399.5,287.6 L400.0,288.2 L400.5,288.8 L401.0,289.5 L401.5,290.3 L402.0,291.1 L402.5,292.0 L403.0,292.9 L403.5,293.8 L404.0,294.7 L404.5,295.7 L405.0,296.6 L405.5,297.5 L406.0,298.4 L406.5,299.3 L407.0,300.2 L407.5,301.0 L408.0,301.7 L408.5,302.4 L409.0,303.0 L409.5,303.5 L410.0,303.9 L410.5,304.3 L411.0,304.5 L411.5,304.6 L412.0,304.6 L412.5,304.4 L413.0,304.2 L413.5,303.8 L414.0,303.3 L414.5,302.7 L415.0,302.0 L415.5,301.3 L416.0,300.5 L416.5,299.6 L417.0,298.7 L417.5,297.7 L418.0,296.7 L418.5,295.7 L419.0,294.7 L419.5,293.6 L420.0,292.6 L420.5,291.6 L421.0,290.6 L421.5,289.6 L422.0,288.7 L422.5,287.8 L423.0,287.0 L423.5,286.2 L424.0,285.5 L424.5,284.9 L425.0,284.4 L425.5,284.0 L426.0,283.7 L426.5,283.5 L427.0,283.5 L427.5,283.7 L428.0,284.0 L428.5,284.5 L429.0,285.2 L429.5,286.1 L430.0,287.0 L430.5,288.1 L431.0,289.3 L431.5,290.6 L432.0,292.0 L432.5,293.4 L433.0,294.8 L433.5,296.3 L434.0,297.8 L434.5,299.3 L435.0,300.7 L435.5,302.1 L436.0,303.4 L436.5,304.7 L437.0,305.9 L437.5,307.0 L438.0,307.9 L438.5,308.7 L439.0,309.4 L439.5,309.9 L440.0,310.2 L440.5,310.3 L441.0,310.2 L441.5,309.8 L442.0,309.2 L442.5,308.4 L443.0,307.4 L443.5,306.2 L444.0,304.9 L444.5,303.4 L445.0,301.9 L445.5,300.2 L446.0,298.4 L446.5,296.6 L447.0,294.7 L447.5,292.9 L448.0,290.9 L448.5,289.1 L449.0,287.2 L449.5,285.4 L450.0,283.6 L450.5,281.9 L451.0,280.4 L451.5,278.9 L452.0,277.6 L452.5,276.4 L453.0,275.4 L453.5,274.6 L454.0,274.0 L454.5,273.6 L455.0,273.5 L455.5,273.7 L456.0,274.3 L456.5,275.2 L457.0,276.5 L457.5,278.0 L458.0,279.8 L458.5,281.9 L459.0,284.1 L459.5,286.6 L460.0,289.2 L460.5,291.9 L461.0,294.8 L461.5,297.7 L462.0,300.7 L462.5,303.6 L463.0,306.6 L463.5,309.6 L464.0,312.4 L464.5,315.2 L465.0,317.9 L465.5,320.4 L466.0,322.7 L466.5,324.9 L467.0,326.8 L467.5,328.5 L468.0,329.8 L468.5,330.9 L469.0,331.6 L469.5,332.0 L470.0,331.9 L470.5,331.1 L471.0,329.8 L471.5,327.8 L472.0,325.3 L472.5,322.4 L473.0,318.9 L473.5,315.1 L474.0,311.0 L474.5,306.5 L475.0,301.7 L475.5,296.8 L476.0,291.6 L476.5,286.4 L477.0,281.1 L477.5,275.7 L478.0,270.3 L478.5,264.7 L479.0,257.9 L479.5,250.2 L480.0,242.2 L480.5,234.2 L481.0,226.1 L481.5,217.6 L482.0,209.1 L482.5,200.7 L483.0,191.4 L483.5,181.6 L484.0,171.6 L484.5,162.1 L485.0,153.5 L485.5,146.2 L486.0,140.8 L486.5,137.3 L487.0,134.2 L487.5,131.3 L488.0,128.7 L488.5,126.3 L489.0,124.4 L489.5,122.9 L490.0,121.9 L490.5,121.5 L491.0,121.7 L491.5,122.5 L492.0,123.9 L492.5,125.8 L493.0,128.0 L493.5,130.6 L494.0,133.4 L494.5,136.3 L495.0,139.3 L495.5,142.8 L496.0,147.2 L496.5,152.4 L497.0,158.3 L497.5,164.8 L498.0,171.7 L498.5,178.9 L499.0,186.3 L499.5,193.7 L500.0,201.2 L500.5,208.7 L501.0,217.2 L501.5,226.0 L502.0,234.3 L502.5,241.8 L503.0,249.1 L503.5,256.1 L504.0,262.5 L504.5,268.2 L505.0,273.5 L505.5,278.9 L506.0,284.3 L506.5,289.7 L507.0,295.0 L507.5,300.2 L508.0,305.1 L508.5,309.8 L509.0,314.2 L509.5,318.1 L510.0,321.6 L510.5,324.6 L511.0,327.0 L511.5,328.7 L512.0,329.7 L512.5,330.0 L513.0,329.7 L513.5,329.0 L514.0,328.0 L514.5,326.7 L515.0,325.1 L515.5,323.2 L516.0,321.1 L516.5,318.7 L517.0,316.2 L517.5,313.6 L518.0,310.8 L518.5,307.9 L519.0,305.0 L519.5,302.0 L520.0,299.1 L520.5,296.2 L521.0,293.3 L521.5,290.5 L522.0,287.8 L522.5,285.3 L523.0,282.9 L523.5,280.7 L524.0,278.8 L524.5,277.1 L525.0,275.7 L525.5,274.6 L526.0,273.9 L526.5,273.5 L527.0,273.5 L527.5,273.8 L528.0,274.3 L528.5,274.9 L529.0,275.8 L529.5,276.8 L530.0,278.0 L530.5,279.3 L531.0,280.8 L531.5,282.3 L532.0,283.9 L532.5,285.6 L533.0,287.4 L533.5,289.2 L534.0,291.0 L534.5,292.8 L535.0,294.6 L535.5,296.4 L536.0,298.2 L536.5,299.9 L537.0,301.5 L537.5,303.0 L538.0,304.5 L538.5,305.8 L539.0,307.0 L539.5,308.0 L540.0,308.9 L540.5,309.5 L541.0,310.0 L541.5,310.3 L542.0,310.3 L542.5,310.1 L543.0,309.8 L543.5,309.3 L544.0,308.6 L544.5,307.9 L545.0,307.0 L545.5,306.0 L546.0,304.9 L546.5,303.7 L547.0,302.4 L547.5,301.1 L548.0,299.8 L548.5,298.4 L549.0,297.0 L549.5,295.7 L550.0,294.3 L550.5,292.9 L551.0,291.6 L551.5,290.4 L552.0,289.2 L552.5,288.1 L553.0,287.0 L553.5,286.1 L554.0,285.3 L554.5,284.6 L555.0,284.1 L555.5,283.7 L556.0,283.5 L556.5,283.5 L557.0,283.6 L557.5,283.8 L558.0,284.0 L558.5,284.3 L559.0,284.8 L559.5,285.3 L560.0,285.9 L560.5,286.5 L561.0,287.3 L561.5,288.1 L562.0,289.0 L562.5,289.9 L563.0,291.0 L563.5,292.1 L564.0,293.3 L564.5,294.5 L565.0,295.9 L565.5,297.2 L566.0,298.7 L566.5,300.2 L567.0,301.8" fill="none" stroke="#c8e01a" stroke-width="1" stroke-linejoin="round"/><line x1="43.8" y1="139.61" x2="567.3" y2="139.61" stroke="#112811" stroke-width="1.05"/><line x1="43.8" y1="171.82" x2="567.3" y2="171.82" stroke="#112811" stroke-width="1.05"/><line x1="43.8" y1="204.03" x2="567.3" y2="204.03" stroke="#112811" stroke-width="1.05"/><line x1="43.8" y1="236.24" x2="567.3" y2="236.24" stroke="#112811" stroke-width="1.05"/><line x1="43.8" y1="268.45" x2="567.3" y2="268.45" stroke="#112811" stroke-width="1.05"/><line x1="43.8" y1="300.66" x2="567.3" y2="300.66" stroke="#112811" stroke-width="1.05"/><line x1="132.88" y1="107" x2="132.88" y2="335.3" stroke="#112811" stroke-width="1.05"/><line x1="219.77" y1="107" x2="219.77" y2="335.3" stroke="#112811" stroke-width="1.05"/><line x1="306.65" y1="107" x2="306.65" y2="335.3" stroke="#112811" stroke-width="1.05"/><line x1="393.53" y1="107" x2="393.53" y2="335.3" stroke="#112811" stroke-width="1.05"/><line x1="480.42" y1="107" x2="480.42" y2="335.3" stroke="#112811" stroke-width="1.05"/><path d="M43.8,107.4 H46 M43.8,332.9 H46 M46,332.9 V335.3 M567.3,332.9 V335.3" stroke="#303030" stroke-width="1"/><line x1="46.3" y1="107.2" x2="46.3" y2="333" stroke="#1f401f" stroke-width="1.2"/><line x1="46" y1="332.9" x2="567.3" y2="332.9" stroke="#1f401f" stroke-width="1.2"/></svg>
<div class="t" style="left:198.00px;top:91.58px;font-size:8.366px;transform:scaleX(0.9288);font-weight:bold;color:#000">RS232 Graphic Interface for Microchip PIC Controllers</div>
<div class="t" style="left:-258.64px;top:102.54px;width:300px;text-align:right;font-size:7.79px;transform-origin:100% 0;transform:scaleX(0.8476);color:#000">70000</div>
<div class="t" style="left:-258.64px;top:134.75px;width:300px;text-align:right;font-size:7.79px;transform-origin:100% 0;transform:scaleX(0.8476);color:#000">60000</div>
<div class="t" style="left:-258.64px;top:166.96px;width:300px;text-align:right;font-size:7.79px;transform-origin:100% 0;transform:scaleX(0.8476);color:#000">50000</div>
<div class="t" style="left:-258.64px;top:199.17px;width:300px;text-align:right;font-size:7.79px;transform-origin:100% 0;transform:scaleX(0.8476);color:#000">40000</div>
<div class="t" style="left:-258.64px;top:231.38px;width:300px;text-align:right;font-size:7.79px;transform-origin:100% 0;transform:scaleX(0.8476);color:#000">30000</div>
<div class="t" style="left:-258.64px;top:263.59px;width:300px;text-align:right;font-size:7.79px;transform-origin:100% 0;transform:scaleX(0.8476);color:#000">20000</div>
<div class="t" style="left:-258.64px;top:295.80px;width:300px;text-align:right;font-size:7.79px;transform-origin:100% 0;transform:scaleX(0.8476);color:#000">10000</div>
<div class="t" style="left:-258.64px;top:328.01px;width:300px;text-align:right;font-size:7.79px;transform-origin:100% 0;transform:scaleX(0.8476);color:#000">0</div>
<div class="t" style="left:-105.13px;top:338.65px;width:300px;text-align:center;font-size:7.077px;transform-origin:50% 0;transform:scaleX(0.9322);color:#000">0</div>
<div class="t" style="left:-18.25px;top:338.65px;width:300px;text-align:center;font-size:7.077px;transform-origin:50% 0;transform:scaleX(0.9322);color:#000">20</div>
<div class="t" style="left:68.64px;top:338.65px;width:300px;text-align:center;font-size:7.077px;transform-origin:50% 0;transform:scaleX(0.9322);color:#000">40</div>
<div class="t" style="left:155.52px;top:338.65px;width:300px;text-align:center;font-size:7.077px;transform-origin:50% 0;transform:scaleX(0.9322);color:#000">60</div>
<div class="t" style="left:242.40px;top:338.65px;width:300px;text-align:center;font-size:7.077px;transform-origin:50% 0;transform:scaleX(0.9322);color:#000">80</div>
<div class="t" style="left:329.29px;top:338.65px;width:300px;text-align:center;font-size:7.077px;transform-origin:50% 0;transform:scaleX(0.9322);color:#000">100</div>
<div class="t" style="left:416.17px;top:338.65px;width:300px;text-align:center;font-size:7.077px;transform-origin:50% 0;transform:scaleX(0.9322);color:#000">120</div>
<div class="t" style="left:292.90px;top:351.29px;font-size:6.939px;transform:scaleX(1.0585);font-weight:bold;color:#000">time [s]</div>
<div class="a" style="left:49px;top:377px;width:45.8px;height:13px;background:#c0c0c0;border-top:1px solid #f4f4f4;border-left:1px solid #f4f4f4;border-right:1.5px solid #202020;border-bottom:1.5px solid #202020;box-shadow:inset -1px -1px 0 #909090"></div>
<div class="t" style="left:63.40px;top:378.74px;font-size:8.504px;transform:scaleX(0.8972);color:#000">Start</div>
<div class="a" style="left:31.6px;top:401.2px;width:79px;height:5.8px;background:#f00;border:1px solid #3a0000;box-shadow:0 0 0 0.6px #d4d4d4"></div>
<div class="a" style="left:149.2px;top:373.3px;width:112.5px;height:40px;border:1px solid #a2a2a2;box-shadow:inset 1px 1px 0 #e2e2e2, 1px 1px 0 #e2e2e2"></div>
<div class="a" style="left:154.3px;top:372.3px;width:34.69999999999999px;height:3px;background:#c0c0c0;"></div>
<div class="t" style="left:156.25px;top:372.49px;font-size:6.939px;transform:scaleX(0.9433);color:#000">Parameter</div>
<div class="t" style="left:157.70px;top:385.23px;font-size:7.143px;transform:scaleX(0.9496);color:#000">Duration:</div>
<div class="t" style="left:157.20px;top:396.59px;font-size:7.652px;transform:scaleX(0.9385);color:#000">Interval:</div>
<div class="a" style="left:192px;top:382.4px;width:34.5px;height:11.5px;background:#fff;border-top:1px solid #505050;border-left:1px solid #505050;border-right:1px solid #e8e8e8;border-bottom:1px solid #e8e8e8;box-shadow:inset 0.5px 0.5px 0 #606060"></div>
<div class="a" style="left:216.0px;top:383.4px;width:9.5px;height:9.5px;background:#c0c0c0;border-top:1px solid #e8e8e8;border-left:1px solid #e8e8e8;border-right:1px solid #404040;border-bottom:1px solid #404040"></div>
<svg class="a" style="left:216.0px;top:383.4px" width="9.5" height="9.5"><path d="M2.25,3.25 L7.25,3.25 L4.75,6.25Z" fill="#000"/></svg>
<div class="t" style="left:195.10px;top:384.95px;font-size:7.077px;transform:scaleX(0.9409);color:#000">120</div>
<div class="a" style="left:192px;top:396px;width:34.5px;height:11.2px;background:#fff;border-top:1px solid #505050;border-left:1px solid #505050;border-right:1px solid #e8e8e8;border-bottom:1px solid #e8e8e8;box-shadow:inset 0.5px 0.5px 0 #606060"></div>
<div class="a" style="left:216.0px;top:397px;width:9.5px;height:9.2px;background:#c0c0c0;border-top:1px solid #e8e8e8;border-left:1px solid #e8e8e8;border-right:1px solid #404040;border-bottom:1px solid #404040"></div>
<svg class="a" style="left:216.0px;top:397px" width="9.5" height="9.2"><path d="M2.25,3.0999999999999996 L7.25,3.0999999999999996 L4.75,6.1Z" fill="#000"/></svg>
<div class="t" style="left:195.10px;top:398.55px;font-size:7.077px;transform:scaleX(0.9409);color:#000">0.5</div>
<div class="t" style="left:231.10px;top:384.51px;font-size:7.219px;transform:scaleX(0.8545);color:#000">Seconds</div>
<div class="t" style="left:231.10px;top:398.11px;font-size:7.219px;transform:scaleX(0.8545);color:#000">Seconds</div>
<div class="a" style="left:273.7px;top:373.3px;width:108px;height:40px;border:1px solid #a2a2a2;box-shadow:inset 1px 1px 0 #e2e2e2, 1px 1px 0 #e2e2e2"></div>
<div class="a" style="left:277.7px;top:372.3px;width:31.0px;height:3px;background:#c0c0c0;"></div>
<div class="t" style="left:280.10px;top:372.49px;font-size:6.939px;transform:scaleX(0.9174);color:#000">Message</div>
<div class="a" style="left:282px;top:383px;width:91px;height:20.7px;background:#fff;border-top:1px solid #404040;border-left:1px solid #404040;border-right:1px solid #e8e8e8;border-bottom:1px solid #e8e8e8"></div>
<div class="t" style="left:288.00px;top:386.26px;font-size:7.716px;transform:scaleX(0.8063);color:#000">Press Start Button.</div>
<div class="a" style="left:393.5px;top:373.3px;width:69.2px;height:40px;border:1px solid #a2a2a2;box-shadow:inset 1px 1px 0 #e2e2e2, 1px 1px 0 #e2e2e2"></div>
<div class="a" style="left:398px;top:372.3px;width:31.5px;height:3px;background:#c0c0c0;"></div>
<div class="t" style="left:400.00px;top:372.49px;font-size:6.939px;transform:scaleX(0.9429);color:#000">Received</div>
<div class="t" style="left:399.00px;top:383.95px;font-size:7.077px;transform:scaleX(0.925);color:#000">Hi-Byte:</div>
<div class="t" style="left:398.00px;top:400.80px;font-size:6.72px;transform:scaleX(1.0084);color:#000">Lo-Byte:</div>
<div class="a" style="left:427.8px;top:382px;width:27.1px;height:11px;background:#fff;border-top:1px solid #404040;border-left:1px solid #404040;border-right:1px solid #e8e8e8;border-bottom:1px solid #e8e8e8"></div>
<div class="a" style="left:427.8px;top:397.4px;width:27.1px;height:11px;background:#fff;border-top:1px solid #404040;border-left:1px solid #404040;border-right:1px solid #e8e8e8;border-bottom:1px solid #e8e8e8"></div>
<div class="t" style="left:440.30px;top:384.18px;font-size:8.366px;transform:scaleX(0.7771);color:#000">36</div>
<div class="t" style="left:440.30px;top:399.48px;font-size:8.366px;transform:scaleX(0.7771);color:#000">72</div>
<div class="a" style="left:475px;top:373.3px;width:89px;height:40px;border:1px solid #a2a2a2;box-shadow:inset 1px 1px 0 #e2e2e2, 1px 1px 0 #e2e2e2"></div>
<div class="a" style="left:480px;top:372.3px;width:27.5px;height:3px;background:#c0c0c0;"></div>
<div class="t" style="left:482.00px;top:372.49px;font-size:6.939px;transform:scaleX(0.898);color:#000">Framing</div>
<div class="t" style="left:480.50px;top:384.09px;font-size:7.652px;transform:scaleX(0.8384);color:#000">Frame-Header:</div>
<div class="t" style="left:480.50px;top:400.07px;font-size:7.002px;transform:scaleX(0.9324);color:#000">Frame-Tail:</div>
<div class="a" style="left:529.6px;top:381.4px;width:27px;height:11.6px;background:#fff;border-top:1px solid #404040;border-left:1px solid #404040;border-right:1px solid #e8e8e8;border-bottom:1px solid #e8e8e8"></div>
<div class="a" style="left:529.6px;top:397.4px;width:27px;height:11.3px;background:#fff;border-top:1px solid #404040;border-left:1px solid #404040;border-right:1px solid #e8e8e8;border-bottom:1px solid #e8e8e8"></div>
<div class="t" style="left:393.10px;top:384.48px;width:300px;text-align:center;font-size:8.366px;transform-origin:50% 0;transform:scaleX(0.7771);color:#000">TX</div>
<div class="t" style="left:393.10px;top:399.98px;width:300px;text-align:center;font-size:8.366px;transform-origin:50% 0;transform:scaleX(0.7771);color:#000">/T</div>
<div class="a" style="left:149.2px;top:425.4px;width:415.5px;height:28.7px;border:1px solid #a2a2a2;box-shadow:inset 1px 1px 0 #e2e2e2, 1px 1px 0 #e2e2e2"></div>
<div class="a" style="left:154.5px;top:424.4px;width:63.5px;height:3px;background:#c0c0c0;"></div>
<div class="t" style="left:156.00px;top:423.63px;font-size:7.143px;transform:scaleX(0.895);color:#000">RS232 Configuration</div>
<div class="t" style="left:158.30px;top:439.79px;font-size:6.939px;transform:scaleX(0.8832);color:#000">ComPort:</div>
<div class="t" style="left:231.50px;top:439.79px;font-size:6.939px;transform:scaleX(0.9673);color:#000">Baudrate:</div>
<div class="t" style="left:324.50px;top:439.79px;font-size:6.939px;transform:scaleX(0.9828);color:#000">Parity-Bit:</div>
<div class="t" style="left:402.00px;top:439.79px;font-size:6.939px;transform:scaleX(0.9453);color:#000">Data-Bits:</div>
<div class="t" style="left:479.70px;top:439.79px;font-size:6.939px;transform:scaleX(0.8897);color:#000">Stop-Bits:</div>
<div class="a" style="left:192.2px;top:436px;width:22.8px;height:12px;background:#fff;border-top:1px solid #505050;border-left:1px solid #505050;border-right:1px solid #e8e8e8;border-bottom:1px solid #e8e8e8;box-shadow:inset 0.5px 0.5px 0 #606060"></div>
<div class="a" style="left:204.5px;top:437px;width:9.5px;height:10px;background:#c0c0c0;border-top:1px solid #e8e8e8;border-left:1px solid #e8e8e8;border-right:1px solid #404040;border-bottom:1px solid #404040"></div>
<svg class="a" style="left:204.5px;top:437px" width="9.5" height="10"><path d="M2.25,3.5 L7.25,3.5 L4.75,6.5Z" fill="#000"/></svg>
<div class="t" style="left:195.20px;top:439.45px;font-size:7.077px;transform:scaleX(0.9409)">4</div>
<div class="a" style="left:269.3px;top:436.2px;width:38.8px;height:11.5px;background:#fff;border-top:1px solid #505050;border-left:1px solid #505050;border-right:1px solid #e8e8e8;border-bottom:1px solid #e8e8e8;box-shadow:inset 0.5px 0.5px 0 #606060"></div>
<div class="a" style="left:297.6px;top:437.2px;width:9.5px;height:9.5px;background:#c0c0c0;border-top:1px solid #e8e8e8;border-left:1px solid #e8e8e8;border-right:1px solid #404040;border-bottom:1px solid #404040"></div>
<svg class="a" style="left:297.6px;top:437.2px" width="9.5" height="9.5"><path d="M2.25,3.25 L7.25,3.25 L4.75,6.25Z" fill="#000"/></svg>
<div class="t" style="left:272.30px;top:439.45px;font-size:7.077px;transform:scaleX(0.9409)">9600</div>
<div class="a" style="left:361.8px;top:436.2px;width:23.5px;height:11.6px;background:#fff;border-top:1px solid #505050;border-left:1px solid #505050;border-right:1px solid #e8e8e8;border-bottom:1px solid #e8e8e8;box-shadow:inset 0.5px 0.5px 0 #606060"></div>
<div class="a" style="left:374.8px;top:437.2px;width:9.5px;height:9.6px;background:#c0c0c0;border-top:1px solid #e8e8e8;border-left:1px solid #e8e8e8;border-right:1px solid #404040;border-bottom:1px solid #404040"></div>
<svg class="a" style="left:374.8px;top:437.2px" width="9.5" height="9.6"><path d="M2.25,3.3 L7.25,3.3 L4.75,6.3Z" fill="#000"/></svg>
<div class="t" style="left:364.80px;top:439.45px;font-size:7.077px;transform:scaleX(0.9409)">N</div>
<div class="a" style="left:439.8px;top:436px;width:23.2px;height:11.8px;background:#fff;border-top:1px solid #505050;border-left:1px solid #505050;border-right:1px solid #e8e8e8;border-bottom:1px solid #e8e8e8;box-shadow:inset 0.5px 0.5px 0 #606060"></div>
<div class="a" style="left:452.5px;top:437px;width:9.5px;height:9.8px;background:#c0c0c0;border-top:1px solid #e8e8e8;border-left:1px solid #e8e8e8;border-right:1px solid #404040;border-bottom:1px solid #404040"></div>
<svg class="a" style="left:452.5px;top:437px" width="9.5" height="9.8"><path d="M2.25,3.4000000000000004 L7.25,3.4000000000000004 L4.75,6.4Z" fill="#000"/></svg>
<div class="t" style="left:442.80px;top:439.45px;font-size:7.077px;transform:scaleX(0.9409)">8</div>
<div class="a" style="left:516px;top:436px;width:22.5px;height:12px;background:#fff;border-top:1px solid #505050;border-left:1px solid #505050;border-right:1px solid #e8e8e8;border-bottom:1px solid #e8e8e8;box-shadow:inset 0.5px 0.5px 0 #606060"></div>
<div class="a" style="left:528.0px;top:437px;width:9.5px;height:10px;background:#c0c0c0;border-top:1px solid #e8e8e8;border-left:1px solid #e8e8e8;border-right:1px solid #404040;border-bottom:1px solid #404040"></div>
<svg class="a" style="left:528.0px;top:437px" width="9.5" height="10"><path d="M2.25,3.5 L7.25,3.5 L4.75,6.5Z" fill="#000"/></svg>
<div class="t" style="left:519.00px;top:439.45px;font-size:7.077px;transform:scaleX(0.9409)">1</div>
<div class="a" style="left:589.5px;top:67px;width:7.5px;height:400px;background:#dadada;"></div>
<div class="a" style="left:589.5px;top:67px;width:1px;height:400px;background:#f4f4f4;"></div>
<div class="a" style="left:589.5px;top:67px;width:7.5px;height:3px;background:#c8c8c8;"></div>
<div class="a" style="left:589.5px;top:69.6px;width:7.5px;height:1px;background:#404040;"></div>
<div class="a" style="left:589.5px;top:70.6px;width:7.5px;height:6.6px;background:#c8c8c8;"></div>
<div class="a" style="left:589.5px;top:70.6px;width:0.8px;height:6.6px;background:#f4f4f4;"></div>
<div class="a" style="left:589.5px;top:77.2px;width:7.5px;height:1px;background:#404040;"></div>
<svg class="a" style="left:589.5px;top:70.6px" width="7.5" height="6.6"><path d="M1.8,4.4 L5.6,4.4 L3.7,2.2Z" fill="#000"/></svg>
<div class="a" style="left:589.5px;top:460.5px;width:7.5px;height:6.5px;background:#c8c8c8;border-top:1px solid #f4f4f4;border-left:1px solid #f4f4f4;border-right:1px solid #404040;border-bottom:1px solid #404040"></div>
<svg class="a" style="left:589.5px;top:460.5px" width="7.5" height="6.5"><path d="M1.8,2.3 L5.6,2.3 L3.7,4.4Z" fill="#000"/></svg>
<div class="a" style="left:597px;top:66px;width:1px;height:411px;background:#c8c8c8;"></div>
<div class="a" style="left:3.5px;top:467px;width:594px;height:6.5px;background:#c0c0c0;"></div>
<div class="a" style="left:3.5px;top:466.6px;width:594px;height:0.8px;background:#909090;"></div>
<div class="a" style="left:2px;top:473.5px;width:596px;height:2.5px;background:#d0d0d0;"></div>
<div class="a" style="left:3.8px;top:467.4px;width:6.5px;height:6px;background:linear-gradient(90deg,#e8e8e8,#a8a8a8);"></div>
<div class="a" style="left:10.3px;top:467.4px;width:6.5px;height:6px;background:linear-gradient(90deg,#e8e8e8,#a8a8a8);"></div>
<div class="a" style="left:16.8px;top:467.4px;width:6.5px;height:6px;background:linear-gradient(90deg,#e8e8e8,#a8a8a8);"></div>
<div class="a" style="left:23.3px;top:467.4px;width:6.5px;height:6px;background:linear-gradient(90deg,#e8e8e8,#a8a8a8);"></div>
<svg class="a" style="left:0;top:467px" width="40" height="7"><path d="M5.3,1.5 V5 M9.2,1.5 L6.2,3.3 L9.2,5Z M15.5,1.5 L12.5,3.3 L15.5,5Z M18.5,1.5 L21.5,3.3 L18.5,5Z M25,1.5 L28,3.3 L25,5Z M28.6,1.5 V5" stroke="#000" stroke-width="0.6" fill="#000"/></svg>
<svg class="a" style="left:0;top:0" width="130" height="478"><path d="M29.5,467 L32.5,474 L74,474 L77.5,467Z" fill="#fafafa"/><path d="M29.5,467 L32.5,474 M74,474 L77.5,467" stroke="#000" stroke-width="0.9"/><path d="M116,474 L119.8,467" stroke="#000" stroke-width="0.9"/></svg>
<div class="t" style="left:33.8px;top:467.6px;font-size:6.5px;font-weight:bold;transform:scaleX(0.9)">RS232-Scope</div>
<div class="t" style="left:83px;top:467.8px;font-size:6.4px;transform:scaleX(0.88);color:#000">RS232-Data</div>
<div class="a" style="left:368px;top:467.3px;width:10.5px;height:6.4px;background:#d8d8d8;"></div>
<div class="a" style="left:369.8px;top:467.3px;width:1.1px;height:6.6px;background:#303030;"></div>
<div class="a" style="left:377px;top:467.3px;width:1.1px;height:6.6px;background:#303030;"></div>
<svg class="a" style="left:368px;top:467.3px" width="10" height="6.4"><path d="M4.6,3.3 L6.6,1.8 L6.6,4.8Z" fill="#000"/></svg>
<div class="a" style="left:378.2px;top:467.6px;width:74.8px;height:5.6px;background:#c4c4c4;border-top:1px solid #f4f4f4;border-left:1px solid #f4f4f4;border-right:1px solid #8a8a8a;border-bottom:1px solid #8a8a8a"></div>
<div class="a" style="left:453px;top:467px;width:128px;height:7px;background:#dcdcdc;"></div>
<div class="a" style="left:452px;top:467.2px;width:1.5px;height:6.8px;background:#303030;"></div>
<div class="a" style="left:581px;top:467.3px;width:6.5px;height:6px;background:#c8c8c8;border-top:1px solid #f4f4f4;border-left:1px solid #f4f4f4;border-right:1px solid #404040;border-bottom:1px solid #404040"></div>
<svg class="a" style="left:581px;top:467.3px" width="6.5" height="6"><path d="M2.5,1.5 L4.8,3 L2.5,4.5Z" fill="#000"/></svg>
<div class="a" style="left:586.5px;top:467px;width:1.2px;height:6.5px;background:#222;"></div>
<svg class="a" style="left:588px;top:466px" width="10" height="8"><path d="M2.5,7.5 V1.8 H9" stroke="#222" stroke-width="1.1" fill="none"/></svg>
</body></html>
